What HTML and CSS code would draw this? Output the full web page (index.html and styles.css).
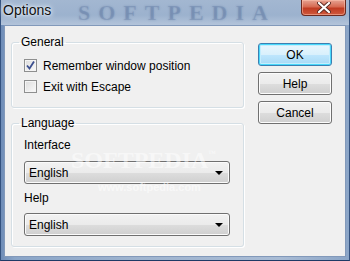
FILE: index.html
```html
<!DOCTYPE html>
<html lang="en">
<head>
<meta charset="UTF-8">
<title>Options</title>
<link rel="stylesheet" href="styles.css">
</head>
<body>
<div class="window">
    <div class="titlebar">
        <span class="title">Options</span>
        <span class="mark-title">SOFTPEDIA</span>
        <div class="close">
            <svg width="14" height="11" viewBox="0 0 14 11">
                <path d="M2 1 L12 10 M12 1 L2 10" stroke="#5a2a22" stroke-width="4" stroke-linecap="round"/>
                <path d="M2 1 L12 10 M12 1 L2 10" stroke="#ffffff" stroke-width="2.2" stroke-linecap="round"/>
            </svg>
        </div>
    </div>
    <div class="client">
        <div class="groups">
            <fieldset class="group general">
                <legend>General</legend>
                <label class="check">
                    <span class="box">
                        <svg width="11" height="11" viewBox="0 0 11 11">
                            <path d="M2 5.5 L4.5 8.5 L9 1.5" fill="none" stroke="#3b4f8f" stroke-width="1.8"/>
                        </svg>
                    </span>
                    Remember window position
                </label>
                <label class="check">
                    <span class="box"></span>
                    Exit with Escape
                </label>
            </fieldset>
            <fieldset class="group language">
                <legend>Language</legend>
                <div class="field-label">Interface</div>
                <div class="combo"><span>English</span><span class="arrow"></span></div>
                <div class="field-label second">Help</div>
                <div class="combo"><span>English</span><span class="arrow"></span></div>
            </fieldset>
        </div>
        <div class="buttons">
            <div class="btn default">OK</div>
            <div class="btn">Help</div>
            <div class="btn">Cancel</div>
        </div>
        <span class="mark-big">SOFTPEDIA<sup>™</sup></span>
        <span class="mark-url">www.softpedia.com</span>
    </div>
</div>
</body>
</html>
```

FILE: styles.css
```css
body {
    margin: 0;
    font-family: "Liberation Sans", Arial, sans-serif;
    font-size: 12px;
    color: #000;
}

.window {
    width: 350px;
    height: 261px;
    box-sizing: border-box;
    display: flex;
    flex-direction: column;
    background: linear-gradient(90deg, #6f8db8 0%, #8aa5c8 4%, #9fb4cf 40%, #a9bcd5 80%, #8ba5c7 100%);
    border-left: 1px solid #34527f;
    border-right: 1px solid #34527f;
    border-bottom: 1px solid #1f3a66;
}

.titlebar {
    height: 25px;
    display: flex;
    align-items: flex-start;
    justify-content: space-between;
    position: relative;
    background: linear-gradient(180deg, #a3b7d1 0%, #9cb2ce 60%, #b3c4da 100%);
}

.title {
    font-size: 14px;
    line-height: 20px;
    padding-left: 2px;
    color: #111;
    text-shadow: 0 0 6px #e6eef8, 0 0 4px #e6eef8, 0 0 2px #e6eef8;
    position: relative;
    z-index: 1;
}

.mark-title {
    position: absolute;
    left: 77px;
    top: 0;
    font-family: "Liberation Serif", serif;
    font-weight: bold;
    font-size: 22px;
    line-height: 25px;
    letter-spacing: 8px;
    color: rgba(50, 80, 130, 0.16);
    text-shadow: 0 0 2px rgba(50, 80, 130, 0.25);
}

.close {
    width: 45px;
    height: 16px;
    margin-right: 3px;
    box-sizing: border-box;
    display: flex;
    align-items: center;
    justify-content: center;
    border: 1px solid #6b2a20;
    border-top: none;
    border-radius: 0 0 4px 4px;
    background: linear-gradient(180deg, #e6a392 0%, #d66a52 45%, #c03b22 55%, #cf5a3e 100%);
    box-shadow: inset 0 0 0 1px rgba(255, 200, 180, 0.5);
    position: relative;
    z-index: 1;
}

.client {
    flex: 1;
    margin: 0 3px 3px 3px;
    box-sizing: border-box;
    border: 1px solid #8299ba;
    background: #f0f0f0;
    display: flex;
    gap: 14px;
    padding: 9px 0 0 6px;
    position: relative;
    overflow: hidden;
}

.groups {
    width: 233px;
}

.group {
    margin: 0;
    min-width: 0;
    border: 1px solid #d5dfe5;
    border-radius: 3px;
    box-shadow: inset 1px 1px 0 #ffffff, 1px 1px 0 #ffffff;
    padding: 6px 13px 10px 12px;
}

.group legend {
    padding: 0 2px;
    margin-left: -5px;
    line-height: 14px;
    color: #000;
}

.language {
    margin-top: 8px;
    padding-top: 8px;
}

.check {
    display: flex;
    align-items: center;
    gap: 6px;
    height: 21px;
}

.box {
    width: 13px;
    height: 13px;
    box-sizing: border-box;
    border: 1px solid #8e8f8f;
    background: linear-gradient(135deg, #dcdcdc 0%, #eeeeee 60%, #fbfbfb 100%);
    box-shadow: inset 0 0 0 1px #f4f4f4;
    display: flex;
    align-items: center;
    justify-content: center;
}

.field-label {
    line-height: 14px;
}

.field-label.second {
    margin-top: 7px;
}

.combo {
    height: 23px;
    margin-top: 9px;
    box-sizing: border-box;
    border: 1px solid #707070;
    border-radius: 3px;
    background: linear-gradient(180deg, #f2f2f2 0%, #ebebeb 50%, #dddddd 52%, #cfcfcf 100%);
    box-shadow: inset 0 0 0 1px #fbfbfb;
    display: flex;
    align-items: center;
    justify-content: space-between;
    padding: 0 6px 0 4px;
}

.field-label.second + .combo {
    margin-top: 8px;
}

.arrow {
    width: 0;
    height: 0;
    border-left: 4px solid transparent;
    border-right: 4px solid transparent;
    border-top: 4px solid #000;
}

.buttons {
    width: 74px;
    margin-top: 8px;
    display: flex;
    flex-direction: column;
    gap: 6px;
}

.btn {
    height: 23px;
    box-sizing: border-box;
    border: 1px solid #707070;
    border-radius: 3px;
    background: linear-gradient(180deg, #f2f2f2 0%, #ebebeb 50%, #dddddd 52%, #cfcfcf 100%);
    box-shadow: inset 0 0 0 1px #fcfcfc;
    display: flex;
    align-items: center;
    justify-content: center;
}

.btn.default {
    border-color: #3c7fb1;
    background: linear-gradient(180deg, #eaf6fd 0%, #d9f0fc 50%, #bee6fd 52%, #a7d9f5 100%);
    box-shadow: inset 0 0 0 1px #48d8fb, inset 0 0 0 2px #c4edfd;
}

.mark-big {
    position: absolute;
    left: 66px;
    top: 121px;
    font-family: "Liberation Serif", serif;
    font-weight: bold;
    font-size: 24px;
    color: rgba(255, 255, 255, 0.5);
    pointer-events: none;
}

.mark-big sup {
    font-size: 8px;
    vertical-align: 12px;
}

.mark-url {
    position: absolute;
    left: 93px;
    top: 155px;
    font-size: 11px;
    font-weight: bold;
    color: rgba(255, 255, 255, 0.55);
    pointer-events: none;
}
```
